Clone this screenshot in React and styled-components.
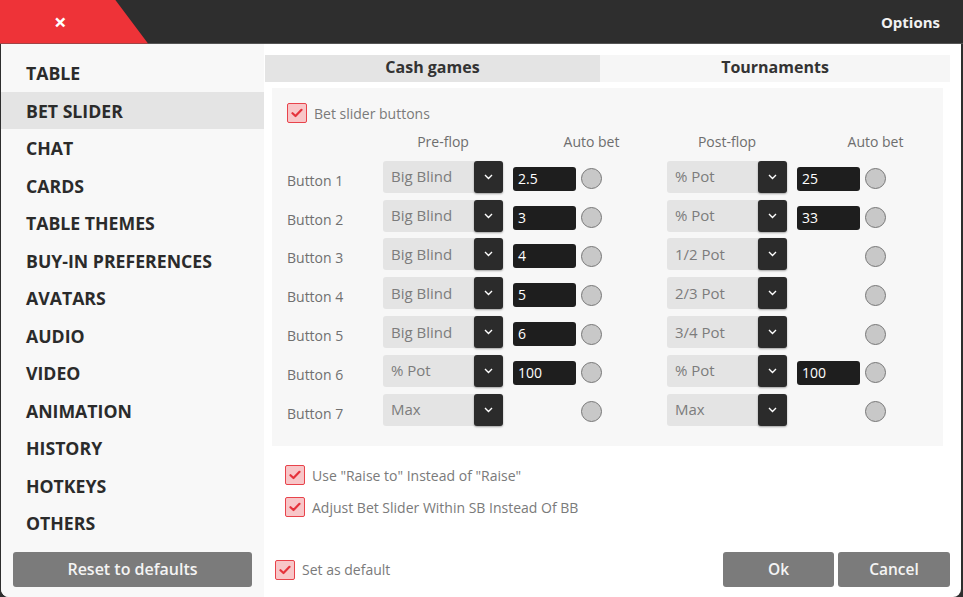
import React from 'react';
import styled, { createGlobalStyle } from 'styled-components';

const GlobalStyle = createGlobalStyle`
  html, body {
    margin: 0;
    padding: 0;
    background: #2e2e2e;
    font-family: "Open Sans", "Liberation Sans", sans-serif;
  }
  * { box-sizing: border-box; }
`;

const menu = [
  'TABLE', 'BET SLIDER', 'CHAT', 'CARDS', 'TABLE THEMES', 'BUY-IN PREFERENCES',
  'AVATARS', 'AUDIO', 'VIDEO', 'ANIMATION', 'HISTORY', 'HOTKEYS', 'OTHERS',
];

const rows = [
  { pre: 'Big Blind', preVal: '2.5', post: '% Pot', postVal: '25' },
  { pre: 'Big Blind', preVal: '3', post: '% Pot', postVal: '33' },
  { pre: 'Big Blind', preVal: '4', post: '1/2 Pot' },
  { pre: 'Big Blind', preVal: '5', post: '2/3 Pot' },
  { pre: 'Big Blind', preVal: '6', post: '3/4 Pot' },
  { pre: '% Pot', preVal: '100', post: '% Pot', postVal: '100' },
  { pre: 'Max', post: 'Max' },
];

const Check = () => (
  <CheckBox>
    <svg width="12" height="10" viewBox="0 0 12 10">
      <path d="M1.5 5.2 L4.5 8 L10.5 1.8" fill="none" stroke="#e5323b" strokeWidth="2.2" strokeLinecap="round" strokeLinejoin="round" />
    </svg>
  </CheckBox>
);

const Select = ({ value }) => (
  <SelectBox>
    <SelectText>{value}</SelectText>
    <Arrow>
      <svg width="9" height="6" viewBox="0 0 9 6">
        <path d="M1 1 L4.5 4.5 L8 1" fill="none" stroke="#fff" strokeWidth="1.4" />
      </svg>
    </Arrow>
  </SelectBox>
);

const App = () => {
  return (
    <>
      <GlobalStyle />
      <Window>
        <Header>
          <CloseTab>×</CloseTab>
          <Title>Options</Title>
        </Header>
        <Body>
          <Sidebar>
            {menu.map((m) => (
              <MenuItem key={m} active={m === 'BET SLIDER'}>{m}</MenuItem>
            ))}
            <ResetButton>Reset to defaults</ResetButton>
          </Sidebar>
          <Content>
            <Tabs>
              <Tab active>Cash games</Tab>
              <Tab>Tournaments</Tab>
            </Tabs>
            <Panel>
              <CheckRow>
                <Check />
                <CheckLabel>Bet slider buttons</CheckLabel>
              </CheckRow>
              <Grid>
                <span />
                <ColHead>Pre-flop</ColHead>
                <span />
                <RadioHead>Auto bet</RadioHead>
                <ColHead>Post-flop</ColHead>
                <span />
                <RadioHead>Auto bet</RadioHead>
                {rows.map((r, i) => (
                  <React.Fragment key={i}>
                    <RowLabel>Button {i + 1}</RowLabel>
                    <Select value={r.pre} />
                    {r.preVal ? <ValueInput>{r.preVal}</ValueInput> : <span />}
                    <Radio />
                    <Select value={r.post} />
                    {r.postVal ? <ValueInput>{r.postVal}</ValueInput> : <span />}
                    <Radio />
                  </React.Fragment>
                ))}
              </Grid>
            </Panel>
            <Options>
              <CheckRow>
                <Check />
                <CheckLabel>Use "Raise to" Instead of "Raise"</CheckLabel>
              </CheckRow>
              <CheckRow>
                <Check />
                <CheckLabel>Adjust Bet Slider Within SB Instead Of BB</CheckLabel>
              </CheckRow>
            </Options>
            <Footer>
              <CheckRow>
                <Check />
                <CheckLabel>Set as default</CheckLabel>
              </CheckRow>
              <Buttons>
                <GreyButton width={111}>Ok</GreyButton>
                <GreyButton width={112}>Cancel</GreyButton>
              </Buttons>
            </Footer>
          </Content>
        </Body>
      </Window>
    </>
  );
};

const Window = styled.div`
  width: 963px;
  height: 597px;
  display: flex;
  flex-direction: column;
  background: #2e2e2e;
  padding: 0 2px 0 1px;
`;

const Header = styled.div`
  height: 44px;
  flex: none;
  display: flex;
  align-items: center;
  justify-content: space-between;
  background: #2e2e2e;
  border-bottom: 1px solid #555;
  margin: 0 -2px 0 -1px;
`;

const CloseTab = styled.div`
  width: 148px;
  height: 44px;
  background: #ee3338;
  clip-path: polygon(0 0, 115px 0, 148px 44px, 0 44px);
  color: #fff;
  font-size: 22px;
  font-weight: 700;
  line-height: 42px;
  padding-left: 54px;
`;

const Title = styled.div`
  color: #f2f2f2;
  font-weight: 700;
  font-size: 15px;
  padding-right: 23px;
`;

const Body = styled.div`
  flex: 1;
  display: flex;
  background: #fff;
  border-radius: 0 0 8px 8px;
  overflow: hidden;
`;

const Sidebar = styled.div`
  width: 263px;
  flex: none;
  background: #f8f8f8;
  display: flex;
  flex-direction: column;
  padding-top: 10px;
`;

const MenuItem = styled.div`
  height: 37.5px;
  line-height: 39px;
  padding-left: 25px;
  font-size: 17.7px;
  font-weight: 700;
  color: #2b2b2b;
  background: ${(p) => (p.active ? '#e4e4e4' : 'transparent')};
`;

const GreyButton = styled.div`
  width: ${(p) => p.width}px;
  height: 35px;
  background: #7b7b7b;
  color: #f4f4f4;
  border-radius: 3px;
  display: flex;
  align-items: center;
  justify-content: center;
  font-size: 15.5px;
  font-weight: 600;
  padding-bottom: 2px;
`;

const ResetButton = styled(GreyButton)`
  width: auto;
  margin: auto 12px 10px;
  font-size: 16px;
`;

const Content = styled.div`
  flex: 1;
  display: flex;
  flex-direction: column;
  padding: 11px 11px 10px 1px;
`;

const Tabs = styled.div`
  display: flex;
  height: 27px;
`;

const Tab = styled.div`
  flex: ${(p) => (p.active ? '0 0 335px' : '1')};
  background: ${(p) => (p.active ? '#e4e4e4' : '#f6f6f6')};
  display: flex;
  align-items: center;
  justify-content: center;
  font-size: 16px;
  font-weight: 700;
  color: #333;
  padding-bottom: 3px;
`;

const Panel = styled.div`
  margin: 6px 7px 0;
  height: 358px;
  background: #f7f7f7;
  padding: 15px 15px 0;
`;

const CheckRow = styled.div`
  display: flex;
  align-items: center;
  gap: 7px;
`;

const CheckBox = styled.div`
  width: 20px;
  height: 20px;
  flex: none;
  background: #f8c6c8;
  border: 1.5px solid #e8434b;
  border-radius: 2px;
  display: flex;
  align-items: center;
  justify-content: center;
`;

const CheckLabel = styled.span`
  font-size: 14px;
  color: #7a7a7a;
`;

const Grid = styled.div`
  display: grid;
  grid-template-columns: 96px 130px 68px 86px 130px 68px 21px;
  grid-template-rows: 27.5px repeat(7, 38.8px);
  align-items: center;
  margin-top: 9px;
`;

const ColHead = styled.div`
  align-self: start;
  width: 120px;
  line-height: 20px;
  text-align: center;
  font-size: 14px;
  color: #6e6e6e;
`;

const RadioHead = styled.div`
  align-self: start;
  width: 21px;
  line-height: 20px;
  display: flex;
  justify-content: center;
  white-space: nowrap;
  font-size: 14px;
  color: #6e6e6e;
`;

const RowLabel = styled.div`
  font-size: 14px;
  color: #707070;
  padding-top: 3px;
`;

const SelectBox = styled.div`
  width: 120px;
  height: 32px;
  margin-top: -4px;
  background: #e4e4e4;
  border-radius: 3px;
  display: flex;
  align-items: stretch;
`;

const SelectText = styled.div`
  flex: 1;
  display: flex;
  align-items: center;
  font-size: 15px;
  color: #7c7c7c;
  padding: 0 0 1px 8px;
`;

const Arrow = styled.div`
  width: 29px;
  background: #2b2b2b;
  border-radius: 3px;
  display: flex;
  align-items: center;
  justify-content: center;
  box-shadow: 0 1px 2px rgba(0, 0, 0, 0.35);
`;

const ValueInput = styled.div`
  width: 63px;
  height: 24px;
  background: #1e1e1e;
  border-radius: 3px;
  color: #fff;
  font-size: 14px;
  line-height: 24px;
  padding-left: 5px;
`;

const Radio = styled.div`
  width: 21px;
  height: 21px;
  border-radius: 50%;
  background: #c8c8c8;
  border: 1.5px solid #777;
`;

const Options = styled.div`
  display: flex;
  flex-direction: column;
  gap: 12px;
  padding: 19px 0 0 20px;
`;

const Footer = styled.div`
  margin-top: auto;
  display: flex;
  align-items: center;
  justify-content: space-between;
  padding-left: 10px;
`;

const Buttons = styled.div`
  display: flex;
  gap: 4px;
`;

export default App;
